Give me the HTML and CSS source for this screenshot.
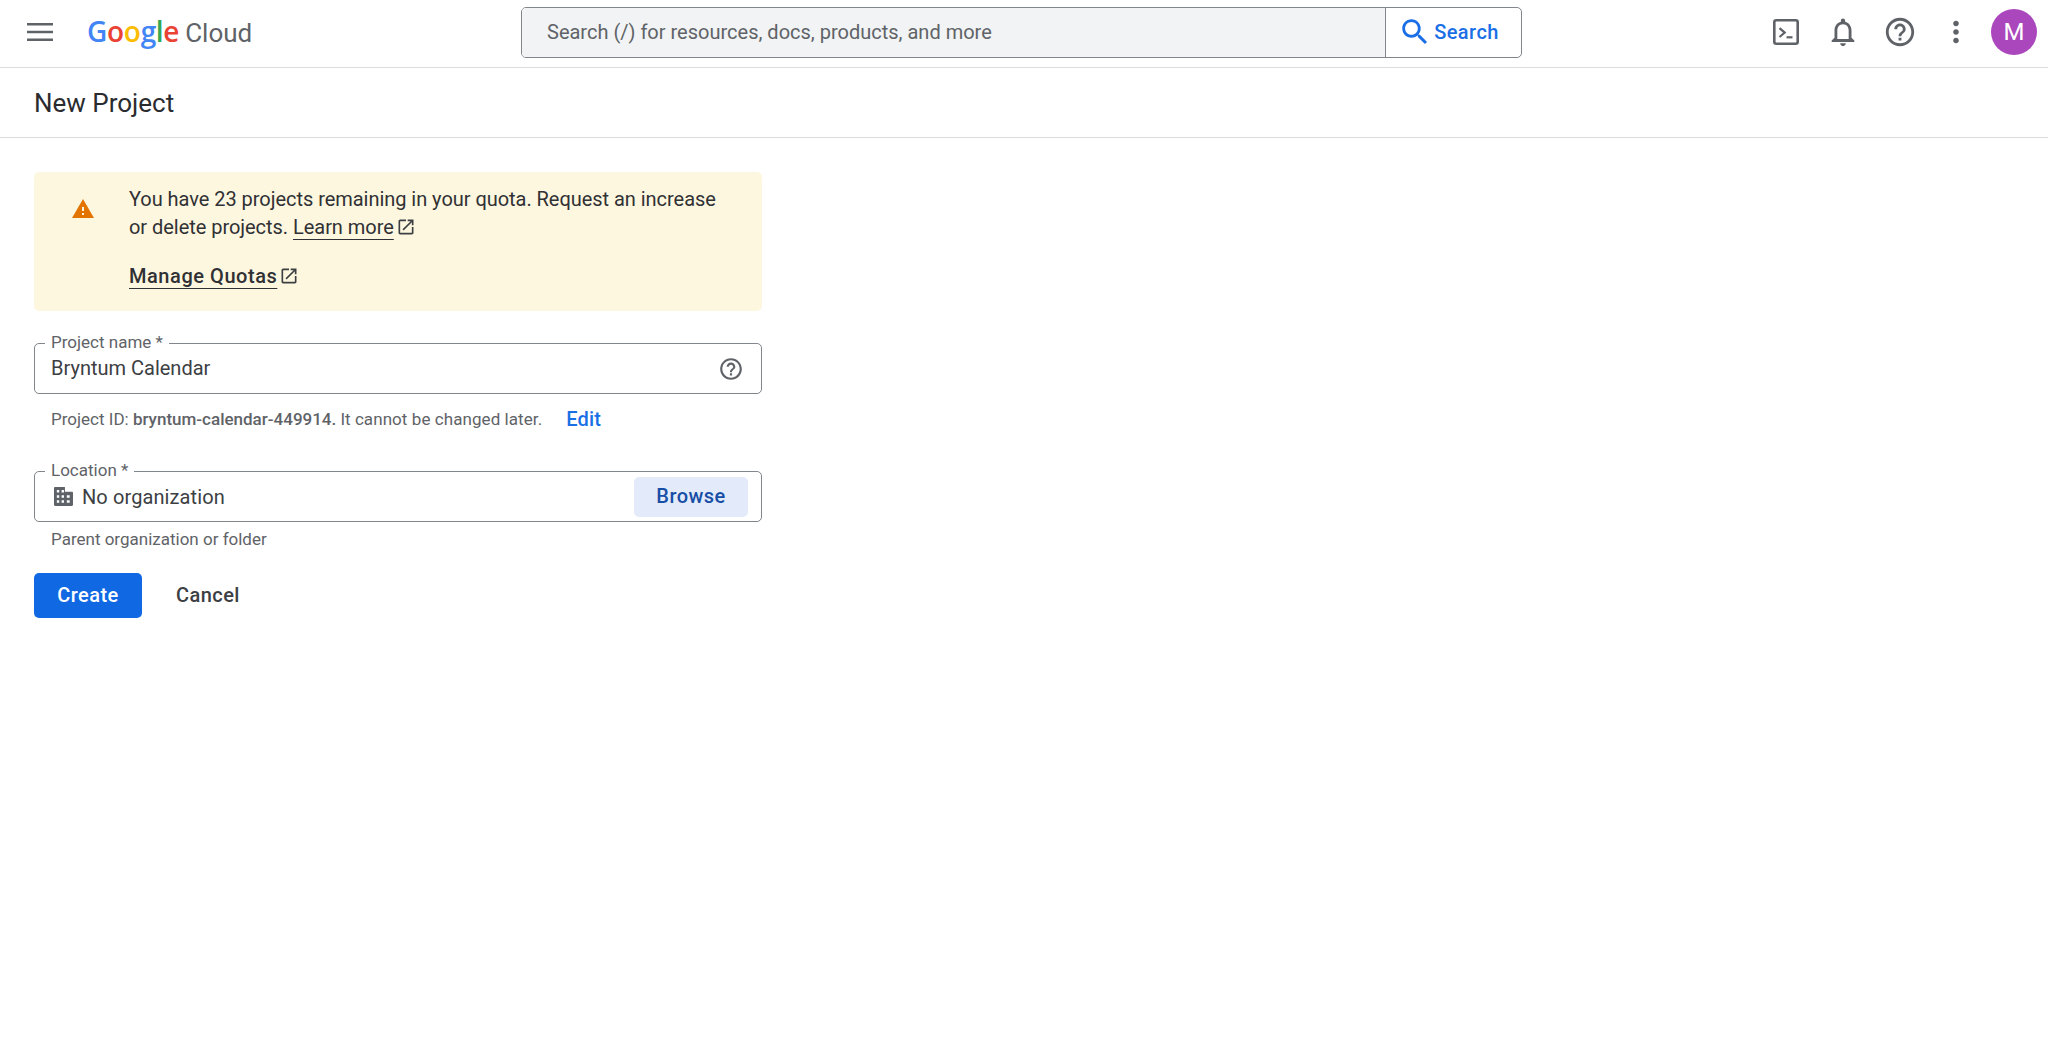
FILE: index.html
```html
<!DOCTYPE html>
<html lang="en">
<head>
<meta charset="utf-8">
<title>New Project</title>
<link rel="stylesheet" href="styles.css">
</head>
<body>
<header class="topbar">
  <div class="brand">
    <svg class="menu-icon" viewBox="0 0 26 18"><path d="M0 0h26v2.6H0zM0 7.7h26v2.6H0zM0 15.4h26V18H0z"/></svg>
    <div class="logo"><span class="logo-google"><span class="g-blue">G</span><span class="g-red">o</span><span class="g-yellow">o</span><span class="g-blue">g</span><span class="g-green">l</span><span class="g-red">e</span></span> <span class="logo-cloud">Cloud</span></div>
  </div>
  <div class="search">
    <div class="search-input">Search (/) for resources, docs, products, and more</div>
    <div class="search-btn">
      <svg class="search-icon" viewBox="0 0 24 24"><path d="M15.5 14h-.79l-.28-.27C15.41 12.59 16 11.11 16 9.5 16 5.91 13.09 3 9.5 3S3 5.91 3 9.5 5.91 16 9.5 16c1.61 0 3.09-.59 4.23-1.57l.27.28v.79l5 4.99L20.49 19l-4.99-5zm-6 0C7.01 14 5 11.99 5 9.5S7.01 5 9.5 5 14 7.01 14 9.5 11.99 14 9.5 14z"/></svg>
      <span>Search</span>
    </div>
  </div>
  <div class="actions">
    <svg class="terminal-icon" viewBox="0 0 26 26"><rect x="1.3" y="1.3" width="23.4" height="23.4" rx="2" fill="none" stroke="#5f6368" stroke-width="2.6"/><path d="M6.5 9.2l5.2 4.4-5.2 4.4" fill="none" stroke="#5f6368" stroke-width="2.2"/><path d="M13.5 17.2h6v2.2h-6z"/></svg>
    <svg class="action-icon" viewBox="0 0 24 24"><path d="M12 22c1.1 0 2-.9 2-2h-4c0 1.1.9 2 2 2zm6-6v-5c0-3.07-1.63-5.64-4.5-6.32V4c0-.83-.67-1.5-1.5-1.5s-1.5.67-1.5 1.5v.68C7.64 5.36 6 7.92 6 11v5l-2 2v1h16v-1l-2-2zm-2 1H8v-6c0-2.48 1.51-4.5 4-4.5s4 2.02 4 4.5v6z"/></svg>
    <svg class="action-icon" viewBox="0 0 24 24"><path d="M11 18h2v-2h-2v2zm1-16C6.48 2 2 6.48 2 12s4.48 10 10 10 10-4.48 10-10S17.52 2 12 2zm0 18c-4.41 0-8-3.59-8-8s3.59-8 8-8 8 3.59 8 8-3.59 8-8 8zm0-14c-2.21 0-4 1.79-4 4h2c0-1.1.9-2 2-2s2 .9 2 2c0 2-3 1.75-3 5h2c0-2.25 3-2.5 3-5 0-2.21-1.79-4-4-4z"/></svg>
    <svg class="action-icon dots-icon" viewBox="0 0 24 24"><path d="M12 8c1.1 0 2-.9 2-2s-.9-2-2-2-2 .9-2 2 .9 2 2 2zm0 2c-1.1 0-2 .9-2 2s.9 2 2 2 2-.9 2-2-.9-2-2-2zm0 6c-1.1 0-2 .9-2 2s.9 2 2 2 2-.9 2-2-.9-2-2-2z"/></svg>
    <div class="avatar">M</div>
  </div>
</header>
<div class="subbar"><h1 class="page-title">New Project</h1></div>
<main class="content">
  <section class="banner">
    <svg class="warn-icon" viewBox="0 0 24 24"><path d="M1 21h22L12 2 1 21zm12-3h-2v-2h2v2zm0-4h-2v-4h2v4z"/></svg>
    <div class="banner-body">
      <p class="banner-text">You have 23 projects remaining in your quota. Request an increase<br>or delete projects. <a class="banner-link">Learn more</a><svg class="ext-icon" viewBox="0 0 24 24"><path d="M19 19H5V5h7V3H5c-1.11 0-2 .9-2 2v14c0 1.1.89 2 2 2h14c1.1 0 2-.9 2-2v-7h-2v7zM14 3v2h3.59l-9.83 9.83 1.41 1.41L19 6.41V10h2V3h-7z"/></svg></p>
      <p class="banner-action"><a class="banner-link strong">Manage Quotas</a><svg class="ext-icon" viewBox="0 0 24 24"><path d="M19 19H5V5h7V3H5c-1.11 0-2 .9-2 2v14c0 1.1.89 2 2 2h14c1.1 0 2-.9 2-2v-7h-2v7zM14 3v2h3.59l-9.83 9.83 1.41 1.41L19 6.41V10h2V3h-7z"/></svg></p>
    </div>
  </section>

  <div class="field field-name">
    <span class="field-label">Project name *</span>
    <span class="field-value">Bryntum Calendar</span>
    <svg class="field-help" viewBox="0 0 24 24"><path d="M11 18h2v-2h-2v2zm1-16C6.48 2 2 6.48 2 12s4.48 10 10 10 10-4.48 10-10S17.52 2 12 2zm0 18c-4.41 0-8-3.59-8-8s3.59-8 8-8 8 3.59 8 8-3.59 8-8 8zm0-14c-2.21 0-4 1.79-4 4h2c0-1.1.9-2 2-2s2 .9 2 2c0 2-3 1.75-3 5h2c0-2.25 3-2.5 3-5 0-2.21-1.79-4-4-4z"/></svg>
  </div>
  <div class="hint-row">
    <span class="hint">Project ID: <b class="hint-strong">bryntum-calendar-449914.</b> It <span class="hint-mid">cannot be changed later.</span></span>
    <a class="edit-link">Edit</a>
  </div>

  <div class="field field-location">
    <span class="field-label">Location *</span>
    <svg class="domain-icon" viewBox="0 0 20 20"><path fill-rule="evenodd" d="M1.2 0h10.3v5h7.3c.7 0 1.2.5 1.2 1.2v12.6c0 .7-.5 1.2-1.2 1.2H1.2C.5 20 0 19.5 0 18.800V1.200C0 .5.500 0 1.200 0zM3 3.200v2.600h2.500V3.200zM8 3.200v2.600h2.500V3.200zM3 8.600v2.600h2.500V8.600zM8 8.600v2.600h2.500V8.600zM13.500 8.600v2.600H16.500V8.600zM3 14v2.600h2.500V14zM8 14v2.600h2.500V14zM13.500 14v2.600H16.500V14z"/></svg>
    <span class="field-value value-location">No organization</span>
    <button class="browse">Browse</button>
  </div>
  <div class="hint parent-hint">Parent organization or folder</div>

  <div class="buttons">
    <button class="create">Create</button>
    <button class="cancel">Cancel</button>
  </div>
</main>
</body>
</html>
```
FILE: styles.css
```css
* { box-sizing: border-box; }
html, body { margin: 0; padding: 0; height: 100%; background: #fff; }
body { font-family: Roboto, "Liberation Sans", sans-serif; color: #202124; overflow: hidden; }
p, h1 { margin: 0; }

.topbar {
  display: flex;
  align-items: center;
  height: 68px;
  border-bottom: 1px solid #dadce0;
  padding-bottom: 3px;
}
.brand { display: flex; align-items: center; width: 521px; flex: none; padding-left: 27px; }
.menu-icon { width: 26px; height: 18px; fill: #5f6368; flex: none; }
.logo { margin-left: 34px; font-size: 28px; line-height: 32px; letter-spacing: -0.3px; white-space: nowrap; font-family: "Open Sans", Roboto, sans-serif; }
.logo-google { font-weight: 600; }
.logo-cloud { color: #5f6368; font-family: Roboto, sans-serif; font-size: 26px; letter-spacing: 0; margin-left: -1px; }
.g-blue { color: #4285f4; }
.g-red { color: #ea4335; }
.g-yellow { color: #fbbc04; }
.g-green { color: #34a853; }

.search {
  display: flex;
  width: 1001px;
  height: 51px;
  border: 1.3px solid #80868b;
  border-radius: 5px;
  overflow: hidden;
  flex: none;
}
.search-input {
  flex: 1;
  display: flex;
  align-items: center;
  background: #f1f3f4;
  padding-left: 25px;
  font-size: 20px;
  color: #5f6368;
}
.search-btn {
  width: 136px;
  display: flex;
  align-items: center;
  justify-content: center;
  gap: 2px;
  padding-right: 10px;
  border-left: 1.3px solid #80868b;
  color: #1a6fe6;
  font-size: 20px;
  font-weight: 460;
  letter-spacing: 0.45px;
}
.search-icon { width: 34px; height: 34px; fill: #1a6fe6; flex: none; }

.actions { display: flex; align-items: center; margin-left: 251px; flex: none; }
.terminal-icon { width: 26px; height: 26px; fill: #5f6368; flex: none; }
.action-icon { width: 34px; height: 34px; fill: #5f6368; flex: none; margin-left: 23px; }
.terminal-icon + .action-icon { margin-left: 27px; }
.action-icon.dots-icon { margin-left: 22px; }
.avatar {
  width: 46px;
  height: 46px;
  border-radius: 50%;
  background: #ab47bc;
  color: #fff;
  font-size: 24px;
  display: flex;
  align-items: center;
  justify-content: center;
  margin-left: 18px;
  flex: none;
}

.subbar {
  display: flex;
  align-items: center;
  height: 70px;
  padding-left: 34px;
  border-bottom: 1px solid #dadce0;
}
.page-title { font-size: 26px; font-weight: 400; line-height: 32px; color: #2a2b2f; }

.content { width: 762px; padding: 34px 0 0 34px; display: flex; flex-direction: column; }

.banner {
  display: flex;
  height: 139px;
  background: #fef7e0;
  border-radius: 5px;
  padding: 13px 0 0 37px;
}
.warn-icon { width: 24px; height: 24px; fill: #e37400; flex: none; margin-top: 12px; }
.banner-body { margin-left: 34px; width: 620px; }
.banner-text { font-size: 20px; line-height: 28px; letter-spacing: -0.04px; color: #303134; }
.banner-action { font-size: 20px; line-height: 28px; margin-top: 21px; letter-spacing: 0.55px; color: #303134; }
.banner-link {
  text-decoration: underline;
  text-decoration-thickness: 1.3px;
  text-underline-offset: 5px;
  text-decoration-skip-ink: none;
}
.banner-link.strong { font-weight: 460; }
.ext-icon { width: 20px; height: 20px; fill: #3c4043; vertical-align: -3px; margin-left: 2px; }

.field {
  position: relative;
  display: flex;
  align-items: center;
  height: 51px;
  border: 1.3px solid #80868b;
  border-radius: 5px;
  padding-left: 16px;
}
.field-name { margin-top: 32px; }
.field-location { margin-top: 31px; }
.field-label {
  position: absolute;
  top: -12px;
  left: 10px;
  padding: 0 6px;
  background: #fff;
  font-size: 17px;
  line-height: 20px;
  color: #5f6368;
}
.field-value { font-size: 20px; color: #3c4043; position: relative; top: -1px; }
.field-value.value-location { top: 0; letter-spacing: 0.1px; }
.field-help { width: 26px; height: 26px; fill: #5f6368; margin-left: auto; margin-right: 17px; flex: none; }
.domain-icon { width: 19px; height: 19px; fill: #5f6368; flex: none; margin-right: 9px; margin-left: 3px; }
.browse {
  margin-left: auto;
  margin-right: 13px;
  width: 114px;
  height: 40px;
  border: 0;
  border-radius: 5px;
  background: #e3ebfa;
  color: #174ea6;
  font: 460 20px Roboto, sans-serif;
  letter-spacing: 0.45px;
  padding: 0 0 2px;
}

.hint-row { display: flex; align-items: center; padding: 4px 0 0 17px; height: 46px; }
.hint { font-size: 17px; color: #5f6368; line-height: 20px; }
.hint-strong { font-weight: 500; }
.hint-mid { letter-spacing: 0.07px; }
.edit-link { margin-left: 24px; color: #1a6fe6; font-size: 20px; font-weight: 460; letter-spacing: 0.2px; }
.parent-hint { padding: 7px 0 0 17px; line-height: 20px; height: 27px; }

.buttons { display: flex; align-items: center; margin-top: 24px; }
.create {
  width: 108px;
  height: 45px;
  border: 0;
  border-radius: 5px;
  background: #1068e3;
  color: #fff;
  font: 460 20px Roboto, sans-serif;
  letter-spacing: 0.45px;
  padding-bottom: 2px;
}
.cancel {
  margin-left: 34px;
  padding: 0 0 2px;
  border: 0;
  background: none;
  color: #3c4043;
  font: 460 20px Roboto, sans-serif;
  letter-spacing: 0.45px;
}
```
